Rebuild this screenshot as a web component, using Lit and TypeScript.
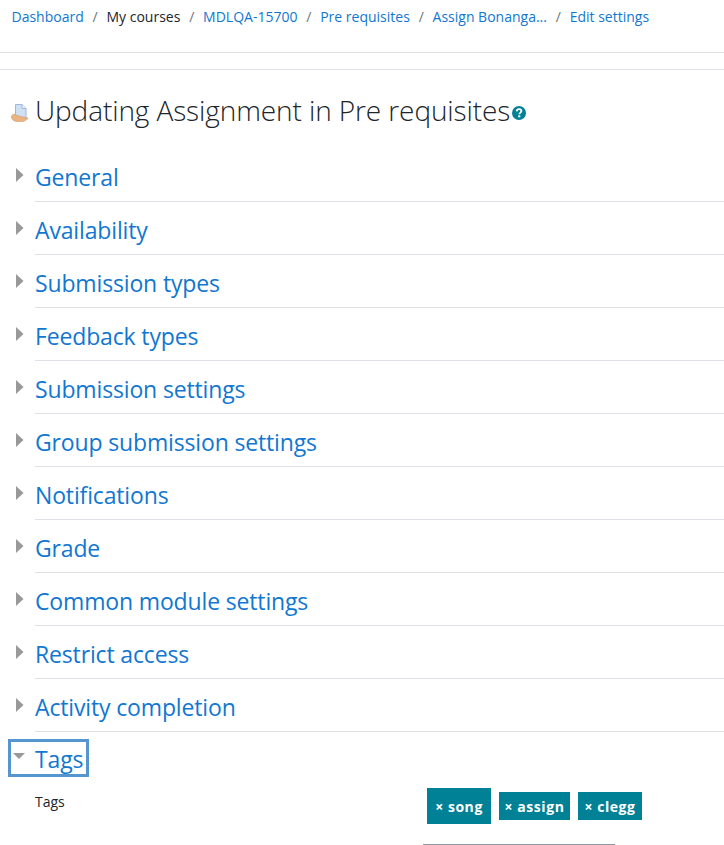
import { LitElement, html, css } from "lit";
import { customElement } from "lit/decorators.js";

const SECTIONS = ["General","Availability","Submission types","Feedback types","Submission settings","Group submission settings","Notifications","Grade","Common module settings","Restrict access","Activity completion"];
const CRUMBS: [string, boolean][] = [["Dashboard",true],["My courses",false],["MDLQA-15700",true],["Pre requisites",true],["Assign Bonanga...",true],["Edit settings",true]];

@customElement("app-root")
export class AppRoot extends LitElement {
  static styles = css`
    :host { display: block; width: 724px; height: 845px; overflow: hidden; background: #fff; font-family: "Open Sans", "Liberation Sans", sans-serif; color: #212529; }
    .crumbs { display: flex; height: 53px; box-sizing: border-box; padding: 7px 0 0 11.5px; font-size: 14px; line-height: 20px; letter-spacing: 0; border-bottom: 1px solid #dee2e6; }
    .crumb { color: #1177d1; }
    .crumb.plain { color: #212529; }
    .sep { color: #6c757d; padding: 0 8.8px; }
    .band { height: 17px; box-sizing: border-box; border-bottom: 1px solid #dee2e6; }
    .title { display: flex; align-items: center; height: 79px; box-sizing: border-box; padding: 0 0 0 11px; }
    .page-icon { width: 18px; height: 18px; margin: 7px 6px 0 0; flex: none; }
    h2 { margin: 0; font-size: 28px; font-weight: 300; line-height: 36px; letter-spacing: -0.1px; white-space: nowrap; }
    .help { width: 14px; height: 14px; margin: 7px 0 0 2px; flex: none; }
    .section { display: flex; height: 53px; box-sizing: border-box; padding: 0 0 0 16px; }
    .arrow { width: 8px; height: 14px; margin: 19px 11px 0 0; flex: none; }
    .sec-body { flex: 1; border-bottom: 1px solid #dee2e6; padding-top: 4px; }
    .sec-title { display: block; height: 48px; font-size: 23px; line-height: 48px; color: #1177d1; letter-spacing: -0.15px; }
    .open { display: inline-flex; align-items: center; margin: 7px 0 0 8px; height: 38px; width: 81px; box-sizing: border-box; border: 3px solid #5596d0; vertical-align: top; }
    .open svg { width: 12px; height: 6px; margin: 0 10px 4px 2px; flex: none; }
    .open span { font-size: 23px; line-height: 30px; margin-top: 2px; color: #1177d1; letter-spacing: -0.15px; }
    .field { display: flex; margin-top: 10px; }
    .label { width: 392px; margin-left: 35px; font-size: 14px; line-height: 20px; padding-top: 5px; }
    .tags { display: flex; align-items: center; gap: 8px; height: 37px; }
    .tag { display: flex; align-items: center; justify-content: center; padding-top: 1px; background: #008196; color: #fff; font-size: 14px; font-weight: 700; height: 28px; box-sizing: border-box; letter-spacing: 0.55px; white-space: pre; }
    .tag.big { height: 36px; }
    .under { width: 192px; height: 1px; background: #8f959e; margin: 20px 0 0 423px; }
  `;

  arrow() {
    return html`<svg class="arrow" viewBox="0 0 8 14"><path d="M0 0 L7.5 7 L0 14 Z" fill="#999"/></svg>`;
  }

  render() {
    return html`
      <nav class="crumbs">
        ${CRUMBS.map(([t, link], i) => html`${i ? html`<span class="sep">/</span>` : ""}<span class="crumb ${link ? "" : "plain"}">${t}</span>`)}
      </nav>
      <div class="band"></div>
      <div class="title">
        <svg class="page-icon" viewBox="0 0 18 18">
          <path d="M4.5 0.5 H11 L15 4.5 V14 H4.5 Z" fill="#cfe0f5" stroke="#9db8dc" stroke-width="1"/>
          <path d="M11 0.5 V4.5 H15" fill="#eef4fc" stroke="#9db8dc" stroke-width="1"/>
          <path d="M0.5 12 C2 9.5 4 10 6 11.5 L12 13 C14 13.5 16 13.5 17 14 C17.5 14.5 15 16.5 12 17.5 C9 18 5 18 2.5 16.5 C1 15.5 0.2 13.5 0.5 12 Z" fill="#e9b384" stroke="#d39a68" stroke-width="0.6"/>
        </svg>
        <h2>Updating Assignment in Pre requisites</h2>
        <svg class="help" viewBox="0 0 14 14">
          <circle cx="7" cy="7" r="7" fill="#008196"/>
          <path d="M4.7 5.4 C4.8 3.9 5.8 3.2 7.1 3.2 C8.5 3.2 9.4 4 9.4 5.1 C9.4 6.6 7.4 6.6 7.3 8.3" fill="none" stroke="#fff" stroke-width="1.8"/>
          <rect x="6.2" y="9.3" width="2.1" height="2" fill="#fff"/>
        </svg>
      </div>
      ${SECTIONS.map(s => html`
        <div class="section">
          ${this.arrow()}
          <div class="sec-body"><span class="sec-title">${s}</span></div>
        </div>`)}
      <div class="open">
        <svg viewBox="0 0 12 6"><path d="M0 0 H12 L6 6 Z" fill="#999"/></svg>
        <span>Tags</span>
      </div>
      <div class="field">
        <div class="label">Tags</div>
        <div class="tags">
          <div class="tag big" style="width:64px">× song</div>
          <div class="tag" style="width:71px">× assign</div>
          <div class="tag" style="width:64px">× clegg</div>
        </div>
      </div>
      <div class="under"></div>
    `;
  }
}
